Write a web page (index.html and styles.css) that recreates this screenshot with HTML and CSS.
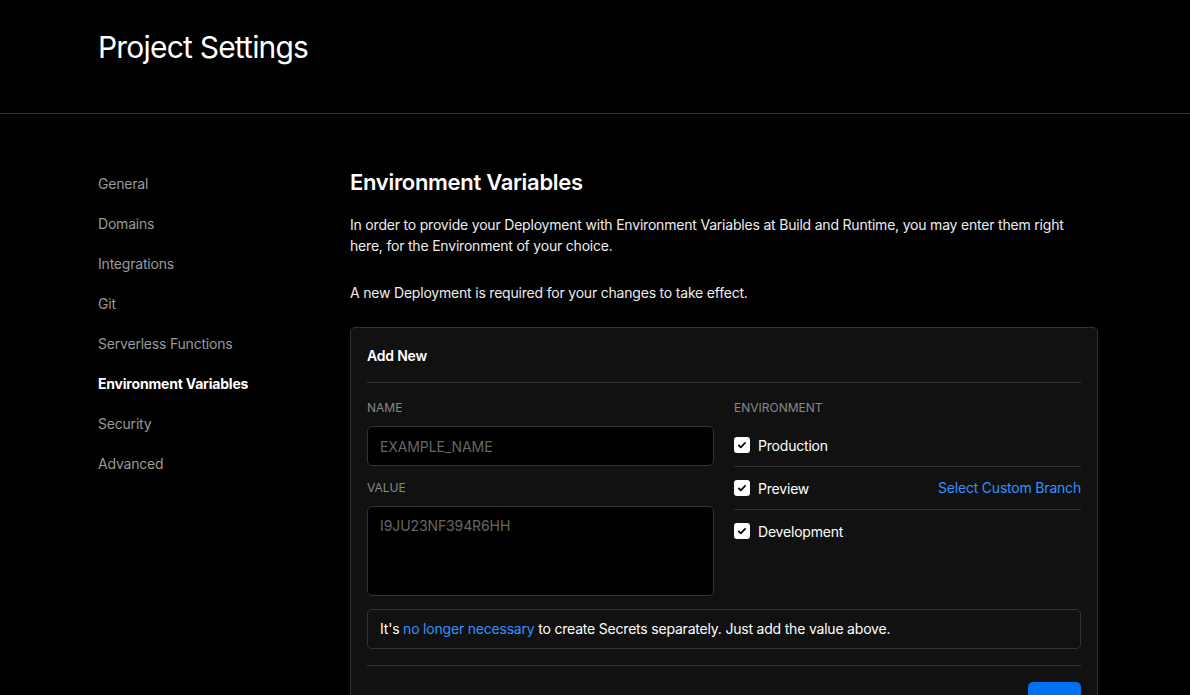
FILE: index.html
```html
<!DOCTYPE html>
<html lang="en">
<head>
  <meta charset="UTF-8">
  <title>Project Settings</title>
  <link rel="stylesheet" href="styles.css">
</head>
<body>
  <header class="top">
    <h1>Project Settings</h1>
  </header>

  <div class="layout">
    <nav class="side">
      <a>General</a>
      <a>Domains</a>
      <a>Integrations</a>
      <a>Git</a>
      <a>Serverless Functions</a>
      <a class="active">Environment Variables</a>
      <a>Security</a>
      <a>Advanced</a>
    </nav>

    <main class="main">
      <h2>Environment Variables</h2>
      <p class="intro">In order to provide your Deployment with Environment Variables at Build and Runtime, you may enter them right here, for the Environment of your choice.</p>
      <p>A new Deployment is required for your changes to take effect.</p>

      <div class="card">
        <div class="card-title">Add New</div>
        <div class="cols">
          <div class="col">
            <label class="lbl">Name</label>
            <input type="text" placeholder="EXAMPLE_NAME">
            <label class="lbl">Value</label>
            <textarea placeholder="I9JU23NF394R6HH"></textarea>
          </div>
          <div class="col">
            <label class="lbl">Environment</label>
            <div class="env">
              <span class="check"><svg viewBox="0 0 16 16" width="16" height="16"><path d="M4.8 8.3l2 2 4.3-4.5" fill="none" stroke="#000" stroke-width="1.7" stroke-linecap="round" stroke-linejoin="round"/></svg></span>
              Production
            </div>
            <div class="env">
              <span class="check"><svg viewBox="0 0 16 16" width="16" height="16"><path d="M4.8 8.3l2 2 4.3-4.5" fill="none" stroke="#000" stroke-width="1.7" stroke-linecap="round" stroke-linejoin="round"/></svg></span>
              Preview
              <a class="link branch">Select Custom Branch</a>
            </div>
            <div class="env">
              <span class="check"><svg viewBox="0 0 16 16" width="16" height="16"><path d="M4.8 8.3l2 2 4.3-4.5" fill="none" stroke="#000" stroke-width="1.7" stroke-linecap="round" stroke-linejoin="round"/></svg></span>
              Development
            </div>
          </div>
        </div>
        <div class="note">It's <a class="link">no longer necessary</a> to create Secrets separately. Just add the value above.</div>
        <div class="card-foot">
          <span class="learn">Learn more about <a class="link">Environment Variables
            <svg viewBox="0 0 16 16" width="12" height="12"><path d="M9 2h5v5M14 2L7 9M12 10v4H2V4h4" fill="none" stroke="#3291ff" stroke-width="1.5"/></svg></a></span>
          <button>Add</button>
        </div>
      </div>
    </main>
  </div>
</body>
</html>
```

FILE: styles.css
```css
body {
  margin: 0;
  background: #000;
  color: #fff;
  font-family: Inter, "Noto Sans", sans-serif;
  font-size: 14px;
  letter-spacing: -0.2px;
  overflow: hidden;
}
.top {
  height: 114px;
  border-bottom: 1px solid #333;
  padding: 0 98px;
  box-sizing: border-box;
}
.top h1 {
  margin: 0;
  padding-top: 29px;
  font-size: 30px;
  font-weight: 400;
  letter-spacing: -0.8px;
}
.layout {
  display: flex;
  padding: 52px 92px 0 98px;
}
.side {
  width: 252px;
  flex-shrink: 0;
  display: flex;
  flex-direction: column;
  gap: 19px;
  padding-top: 7px;
}
.side a {
  color: #999;
  line-height: 21px;
}
.side a.active {
  color: #fff;
  font-weight: 700;
}
.main {
  flex: 1;
}
.main h2 {
  margin: 0;
  font-size: 22px;
  font-weight: 600;
  letter-spacing: -0.3px;
  line-height: 32px;
}
.main p {
  margin: 0 0 24px;
  line-height: 21px;
  color: #ededed;
  max-width: 748px;
}
.main p.intro {
  margin: 16px 0 26px;
}
.card {
  background: #111;
  border: 1px solid #333;
  border-radius: 5px;
  padding: 0 16px;
}
.card-title {
  font-weight: 600;
  padding: 18px 0 16px;
  border-bottom: 1px solid #333;
  line-height: 20px;
}
.cols {
  display: flex;
  gap: 20px;
  padding-top: 17px;
}
.col {
  flex: 1;
  display: flex;
  flex-direction: column;
}
.lbl {
  font-size: 12px;
  text-transform: uppercase;
  color: #888;
  line-height: 16px;
  letter-spacing: 0;
  margin-bottom: 10px;
}
input, textarea {
  background: #000;
  border: 1px solid #333;
  border-radius: 5px;
  color: #fff;
  font-family: inherit;
  font-size: 14px;
  letter-spacing: -0.1px;
  padding: 0 12px;
  box-sizing: border-box;
}
input {
  height: 40px;
  margin-bottom: 14px;
}
textarea {
  height: 90px;
  resize: none;
  padding-top: 10px;
}
::placeholder {
  color: #666;
}
.env {
  display: flex;
  align-items: center;
  gap: 8px;
  height: 42px;
  border-bottom: 1px solid #333;
  font-size: 14px;
}
.env:first-of-type {
  margin-top: -2px;
}
.env:last-child {
  border-bottom: none;
}
.check {
  width: 16px;
  height: 16px;
  background: #fff;
  border-radius: 3px;
  display: flex;
}
.link {
  color: #3291ff;
}
.branch {
  margin-left: auto;
  margin-top: -2px;
}
.note {
  margin-top: 13px;
  border: 1px solid #333;
  border-radius: 5px;
  padding: 0 12px;
  line-height: 38px;
}
.card-foot {
  margin-top: 16px;
  border-top: 1px solid #333;
  display: flex;
  justify-content: space-between;
  align-items: center;
  padding: 16px 0;
}
.learn {
  color: #ededed;
}
button {
  background: #0070f3;
  color: #fff;
  border: none;
  border-radius: 5px;
  font-family: inherit;
  font-size: 14px;
  font-weight: 500;
  height: 36px;
  padding: 0 13px;
}
```
